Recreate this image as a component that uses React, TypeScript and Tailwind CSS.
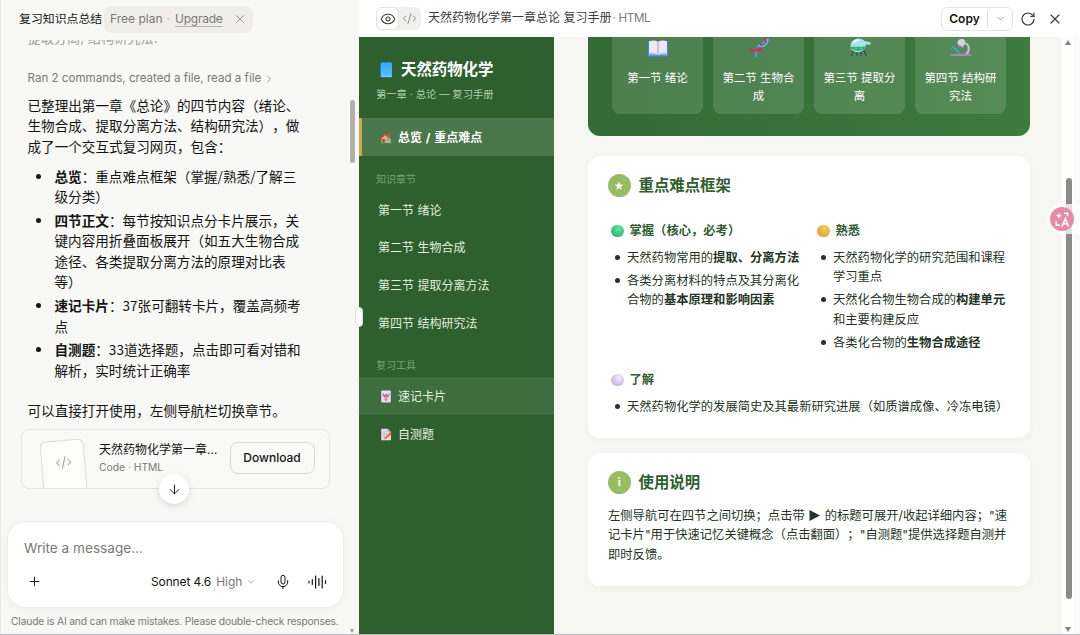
import type { ReactNode } from 'react'
import { ArrowDown, ChevronDown, ChevronRight, CodeXml, Eye, Mic, Plus, RotateCw, X } from 'lucide-react'

const BookIcon = () => (
  <svg width="14" height="16" viewBox="0 0 14 16">
    <defs>
      <linearGradient id="book" x1="0" y1="0" x2="0" y2="1">
        <stop offset="0" stopColor="#3ba5f2" />
        <stop offset="1" stopColor="#4fc3fb" />
      </linearGradient>
    </defs>
    <rect x="1" y=".5" width="12" height="15" rx="1" fill="#2377c8" />
    <rect x="2" y=".5" width="11" height="13.5" rx="1" fill="url(#book)" />
    <path d="M2 14.5h11" stroke="#b9dcf5" strokeWidth=".8" />
  </svg>
)

const HouseIcon = () => (
  <svg width="12" height="12" viewBox="0 0 12 12">
    <path d="M8.5 1h1.7v4H8.5z" fill="#b85a45" />
    <path d="M1.5 6 4.7 2l6 3.8V11h-9.2z" fill="#e7a586" />
    <path d="M.5 6.3 4.5 1.2l6.8 5.2-1 .8L5 3.2 1.3 7.2z" fill="#d4483a" />
    <path d="M2.5 7h2.2v4H2.5z" fill="#a34a32" />
    <path d="M6.5 6.6h2.8v2.6H6.5z" fill="#52b4e5" />
    <path d="M.8 10.5h3v1.2h-3zM9.5 10h2v1.7h-2z" fill="#54a851" />
  </svg>
)

const JokerIcon = () => (
  <svg width="12" height="13" viewBox="0 0 12 13">
    <rect x="1.2" y=".5" width="9.6" height="12" rx="1" fill="#e6deee" />
    <path d="M3 4.5 5 5l1-2 1 2 2.2-.7-.8 3H3.8z" fill="#c85a9c" />
    <circle cx="6" cy="8" r="1.8" fill="#e89a6b" />
    <path d="M4.2 9.5h3.6L6 11z" fill="#5a77d6" />
    <circle cx="3" cy="4.5" r=".8" fill="#d9495c" />
    <circle cx="9" cy="4.3" r=".8" fill="#4ba0dd" />
  </svg>
)

const MemoIcon = () => (
  <svg width="12" height="13" viewBox="0 0 12 13">
    <path d="M1.2.8h6.3L11 4v8.3H1.2z" fill="#e3dae9" />
    <path d="M7.5.8 11 4H7.5z" fill="#b9a8c4" />
    <path d="M3 4h3.5M3 6h4M3 8h2" stroke="#b4a4c0" strokeWidth=".7" />
    <path d="m4 11.2.8-2.3 5-4.3 1.7 1.9-5.2 4.2z" fill="#ef7a3c" />
    <path d="m9.4 5 .9-.8 1.6 1.8-.9.8z" fill="#e23f54" />
  </svg>
)

const OpenBookIcon = () => (
  <svg width="22" height="20" viewBox="0 0 22 20">
    <path d="M.8 4h20.4v15.5H.8z" fill="#3f86dd" />
    <path d="M1.5 17h19v1.3h-19z" fill="#77baf4" />
    <path d="M2 4.2q5-1.6 9 .5 4-2.1 9-.5v12.6q-5-1-9 .8-4-1.8-9-.8z" fill="#efe6f8" />
    <path d="M11 4.8v12.4" stroke="#aa98c4" strokeWidth="1" />
  </svg>
)

const DnaIcon = () => (
  <svg width="22" height="20" viewBox="0 0 22 20" fill="none" strokeLinecap="round">
    <path d="m4.5 12 3 4M7.500 11l2.500 3M12.500 6l3.500 3.500M15 4l3 3" stroke="#8b6ad0" strokeWidth="1" />
    <path d="M7.800 19c1.700-3-.8-5.500 1-8 2-3 4-1 6-5 1-2 3-3 5.500-3" stroke="#38a7ee" strokeWidth="1.900" />
    <path d="M1.500 13c3-1 6 1.500 9 .5 3.500-1.500 1-4.500 3-6.500M17 1c-.5 2 .5 4 3 5" stroke="#df2850" strokeWidth="1.900" />
    <path d="M11 8c1 2.500 4 2.500 7-.5s1-3 1.500-5" stroke="#54c1f7" strokeWidth="1.500" />
    <path d="M9 11c0 3 3 3.500 5 0" stroke="#df2850" strokeWidth="1.700" />
  </svg>
)

const AlembicIcon = () => (
  <svg width="22" height="20" viewBox="0 0 22 20">
    <path d="M5 13 2.500 19M14.500 13l3 6M8 14v5M12 14v5M3 14h13.500" stroke="#33495a" strokeWidth="1.200" fill="none" />
    <path d="M1.500 9c0-8 11-9.500 14-5l6 1.200v2.600l-4.800-.3c.5 10-15.200 10-15.200 1.500z" fill="#a7e2ef" />
    <path d="M1.700 9.800h15c-.6 5.500-14.400 5.500-15 0z" fill="#26b26d" />
    <path d="M4 6.500c1-2.500 4-3.500 6-3" stroke="#e2fbff" strokeWidth="1.700" fill="none" />
    <circle cx="7" cy="11.300" r=".8" fill="#8ff0b0" />
    <circle cx="12" cy="11.300" r=".8" fill="#8ff0b0" />
  </svg>
)

const MicroscopeIcon = () => (
  <svg width="22" height="20" viewBox="0 0 22 20">
    <path d="M14 6c6 1 6 8 2 11.500" stroke="#c9b9cf" strokeWidth="2.200" fill="none" />
    <path d="M7.500 6c-.5-3 3.500-5 6.500-3.500 1.800 1 1.500 3 .5 5L12.500 11 8.500 9z" fill="#dacde0" />
    <path d="m8.300 7.800 4.500 2-1 1.900-4-1.900z" fill="#8e7a9b" />
    <path d="m2.500 8.500 7.500 6.500-1 1.500L1.500 10z" fill="#39a2e6" />
    <path d="M.5 17.200q10.500-1.200 21 0V19H.5z" fill="#9f88b0" />
  </svg>
)

const Ball = ({ from, to }: { from: string; to: string }) => (
  <span
    className="ml-[3px] mr-[6px] size-[12.5px] shrink-0 rounded-full"
    style={{ background: `radial-gradient(circle at 60% 30%, ${from}, ${to})` }}
  />
)

const lines = (rows: ReactNode[]) =>
  rows.map((row, i) => (
    <span key={i} className="block whitespace-nowrap">
      {row}
    </span>
  ))

const summary: { title: string; rows: string[] }[] = [
  { title: '总览', rows: ['：重点难点框架（掌握/熟悉/了解三', '级分类）'] },
  {
    title: '四节正文',
    rows: ['：每节按知识点分卡片展示，关', '键内容用折叠面板展开（如五大生物合成', '途径、各类提取分离方法的原理对比表', '等）'],
  },
  { title: '速记卡片', rows: ['：37张可翻转卡片，覆盖高频考', '点'] },
  { title: '自测题', rows: ['：33道选择题，点击即可看对错和', '解析，实时统计正确率'] },
]

const ChatPanel = () => (
  <section className="relative flex w-[359px] shrink-0 flex-col border-l border-[#e9e9e7] bg-[#f8f8f6] text-[#141413]">
    <header className="flex h-[38px] shrink-0 items-center pl-[18px]">
      <h1 className="w-[85px] shrink-0 whitespace-nowrap text-[11.9px]">复习知识点总结</h1>
      <div className="flex h-[27px] w-[149px] items-center rounded-lg bg-[#efeeeb] pl-[6px] text-[12px] text-[#7b7974]">
        <span className="whitespace-nowrap">Free plan</span>
        <span className="ml-1 mr-[5px] text-[#aaa]">·</span>
        <span className="border-b border-[#b5b3ad] leading-[14px] tracking-[-0.02em]">Upgrade</span>
        <X size={14} strokeWidth={1.3} className="ml-2.5" />
      </div>
    </header>

    <div className="flex min-h-0 flex-1 flex-col pl-[26.5px]">
      <div className="mt-0.5 flex h-[5px] shrink-0 items-end overflow-hidden text-[13.2px] leading-[14px] text-[#a09f9b]">
        提取分离, 结构研究法.
      </div>
      <div className="mt-[24.5px] flex h-[18px] shrink-0 items-center text-[11.6px] text-[#7b7974]">
        <span className="whitespace-nowrap">Ran 2 commands, created a file, read a file</span>
        <ChevronRight size={12} strokeWidth={1.5} className="ml-0.5" />
      </div>
      <div className="mt-[7.5px] font-['Noto_Sans_CJK_SC',sans-serif] text-[13.6px] leading-[20.4px]">
        <p>{lines(['已整理出第一章《总论》的四节内容（绪论、', '生物合成、提取分离方法、结构研究法），做', '成了一个交互式复习网页，包含：'])}</p>
        <ul className="mt-[9.5px] flex flex-col gap-[3.5px]">
          {summary.map(({ title, rows }) => (
            <li key={title} className="flex">
              <span className="ml-2 mr-[14px] mt-2 size-[5px] shrink-0 rounded-full bg-[#141413]" />
              <div>
                {lines([
                  <>
                    <b>{title}</b>
                    {rows[0]}
                  </>,
                  ...rows.slice(1),
                ])}
              </div>
            </li>
          ))}
        </ul>
        <p className="mt-5 whitespace-nowrap">可以直接打开使用，左侧导航栏切换章节。</p>
      </div>
    </div>

    <div className="ml-[19.5px] flex h-[60px] w-[309px] shrink-0 overflow-hidden rounded-lg border border-[#e6e5e2] bg-[#f9f9f7]">
      <div className="ml-[20px] mt-[10px] flex h-[64px] w-[44px] shrink-0 -rotate-[5deg] justify-center rounded-md border border-[#dddcd9] bg-[#fcfcfb] pt-[13px] text-[#8c8a85]">
        <CodeXml size={17} strokeWidth={1.2} />
      </div>
      <div className="ml-[13.5px] mt-[11px] w-[121.5px] whitespace-nowrap">
        <div className="text-[12px] leading-[18px]">天然药物化学第一章…</div>
        <div className="text-[10.3px] leading-[16px] text-[#7b7974]">Code · HTML</div>
      </div>
      <button className="ml-[9px] mt-[12px] h-8 w-[85px] shrink-0 rounded-lg border border-[#d9d8d5] text-[12px] font-medium">Download</button>
    </div>

    <div className="ml-[6px] mt-[32px] flex h-[87px] w-[337px] shrink-0 flex-col rounded-[18px] border border-[#ececea] bg-white px-[16px] shadow-[0_3px_14px_rgba(0,0,0,0.04)]">
      <div className="mt-[16px] text-[13.6px] leading-5 text-[#7b7974]">Write a message…</div>
      <div className="mt-[12px] flex h-6 items-center text-[12px]">
        <Plus size={15} strokeWidth={1.5} className="ml-[3px] shrink-0" />
        <span className="ml-[109px] whitespace-nowrap tracking-[-0.01em]">Sonnet 4.6</span>
        <span className="ml-[5px] text-[#7b7974]">High</span>
        <ChevronDown size={10} strokeWidth={1.5} className="ml-1 shrink-0 text-[#7b7974]" />
        <Mic size={16} strokeWidth={1.5} className="ml-[19px] shrink-0" />
        <svg width="19" height="14" viewBox="0 0 19 14" className="ml-[17px] shrink-0" stroke="currentColor" strokeWidth="1.2" strokeLinecap="round">
          <path d="M1 6v2M4.3 4.5v5M7.6 1v12M10.9 3.5v7M14.2 1v12M17.5 5.5v3" />
        </svg>
      </div>
    </div>
    <p className="mt-[5px] h-[21.5px] shrink-0 whitespace-nowrap pl-[10px] text-[10.3px] leading-[16px] tracking-[-0.018em] text-[#7b7974]">
      Claude is AI and can make mistakes. Please double-check responses.
    </p>

    <button className="absolute left-[158px] top-[474px] flex size-[30px] items-center justify-center rounded-full bg-white shadow-[0_2px_7px_rgba(0,0,0,0.13)]">
      <ArrowDown size={15} strokeWidth={1.5} />
    </button>
    <div className="absolute left-[349px] top-[100px] h-[63px] w-[5px] rounded-full bg-[#b0b0ae]" />
    <span className="absolute bottom-[1px] left-[349px] border-x-[2.5px] border-t-4 border-x-transparent border-t-[#999]" />
  </section>
)

const NavItem = ({ icon, children, className = '' }: { icon?: ReactNode; children: ReactNode; className?: string }) => (
  <a className={`flex h-[37.7px] items-center whitespace-nowrap border-l-[3px] border-transparent pl-4 text-[12px] text-[#e0efdf] ${className}`}>
    {icon && <span className="ml-[2px] mr-[6px]">{icon}</span>}
    {children}
  </a>
)

const Sidebar = () => (
  <nav className="w-[195px] shrink-0 bg-[#2d602e]">
    <div className="flex h-[81px] flex-col pl-[17px] pt-[22px]">
      <div className="flex h-[22px] items-center whitespace-nowrap text-[15.4px] font-bold text-white">
        <span className="ml-[3px] mr-2">
          <BookIcon />
        </span>
        天然药物化学
      </div>
      <div className="mt-[5px] whitespace-nowrap text-[10.3px] leading-4 text-[#b0d0ae]">第一章 · 总论 — 复习手册</div>
    </div>
    <NavItem icon={<HouseIcon />} className="border-l-[#d6a64c]! bg-[#4b774c] pt-[2px] font-bold text-white!">
      <span className="[word-spacing:1px]">总览 / 重点难点</span>
    </NavItem>
    <div className="mt-[15px] pl-[17px] text-[10px] leading-4 text-[#78a276]">知识章节</div>
    <div className="mt-[5px]">
      <NavItem>第一节 绪论</NavItem>
      <NavItem>第二节 生物合成</NavItem>
      <NavItem>第三节 提取分离方法</NavItem>
      <NavItem>第四节 结构研究法</NavItem>
    </div>
    <div className="mt-[15px] pl-[17px] text-[10px] leading-4 text-[#78a276]">复习工具</div>
    <div className="mt-[4px]">
      <NavItem icon={<JokerIcon />} className="bg-[#3e6e3e] pt-px">
        速记卡片
      </NavItem>
      <NavItem icon={<MemoIcon />} className="pt-[2px]">
        自测题
      </NavItem>
    </div>
  </nav>
)

const chapters = [
  { icon: <OpenBookIcon />, rows: ['第一节 绪论'] },
  { icon: <DnaIcon />, rows: ['第二节 生物合', '成'] },
  { icon: <AlembicIcon />, rows: ['第三节 提取分', '离'] },
  { icon: <MicroscopeIcon />, rows: ['第四节 结构研', '究法'] },
]

const CardTitle = ({ badge, children }: { badge: ReactNode; children: ReactNode }) => (
  <h2 className="flex h-[22px] items-center gap-2 text-[15.4px] font-bold text-[#2d602e]">
    <span className="flex size-[22.5px] items-center justify-center rounded-full bg-[#97bd63] text-[11px] text-white">{badge}</span>
    {children}
  </h2>
)

const Topic = ({ ball, title, items, className = '' }: { ball: ReactNode; title: string; items: ReactNode[][]; className?: string }) => (
  <div className={className}>
    <h3 className="flex h-5 items-center whitespace-nowrap text-[12.3px] font-bold text-[#315c32]">
      {ball}
      {title}
    </h3>
    <ul className="mt-[6.5px] flex flex-col gap-[3.3px]">
      {items.map((rows, i) => (
        <li key={i} className="flex leading-[19.8px]">
          <span className="ml-[7px] mr-[7px] mt-[7px] size-[5px] shrink-0 rounded-full bg-[#263326]" />
          <div>{lines(rows)}</div>
        </li>
      ))}
    </ul>
  </div>
)

const Content = () => (
  <main className="flex min-w-0 flex-1 justify-between bg-[#f6f7f2] pl-[34px] text-[12.3px] text-[#263326]">
    <div className="w-[442px] shrink-0">
      <div className="flex h-[98.5px] gap-[10px] rounded-b-xl bg-linear-to-r from-[#326b34] to-[#3d7b3e] px-6">
        {chapters.map(({ icon, rows }) => (
          <div key={rows[0]} className="flex h-[76.5px] w-[91px] flex-col items-center rounded-b-lg bg-white/13 text-[11.5px] text-white">
            {icon}
            <div className="mt-[12px] text-center leading-[18px]">{lines(rows)}</div>
          </div>
        ))}
      </div>

      <section className="mt-5 h-[282px] rounded-xl bg-white px-5 pt-[19px] shadow-[0_2px_6px_rgba(45,96,46,0.05)]">
        <CardTitle
          badge={
            <svg width="10" height="10" viewBox="0 0 10 10" fill="currentColor">
              <path d="m5 .5 1.1 3.1 3.3.1-2.6 2 .9 3.3L5 7.1 2.3 9l.9-3.3-2.6-2 3.3-.1z" />
            </svg>
          }
        >
          重点难点框架
        </CardTitle>
        <div className="mt-[24.5px] grid grid-cols-[206px_1fr]">
          <Topic
            ball={<Ball from="#62e8a2" to="#1fa06a" />}
            title="掌握（核心，必考）"
            items={[
              [<>天然药物常用的<b>提取、分离方法</b></>],
              ['各类分离材料的特点及其分离化', <>合物的<b>基本原理和影响因素</b></>],
            ]}
          />
          <Topic
            ball={<Ball from="#f8cf57" to="#dd8f2e" />}
            title="熟悉"
            items={[
              ['天然药物化学的研究范围和课程', '学习重点'],
              [<>天然化合物生物合成的<b>构建单元</b></>, '和主要构建反应'],
              [<>各类化合物的<b>生物合成途径</b></>],
            ]}
          />
        </div>
        <Topic
          className="mt-[17px]"
          ball={<Ball from="#f3edfb" to="#b3a0d2" />}
          title="了解"
          items={[['天然药物化学的发展简史及其最新研究进展（如质谱成像、冷冻电镜）']]}
        />
      </section>

      <section className="mt-[15px] h-[133px] rounded-xl bg-white px-5 pt-[19px] shadow-[0_2px_6px_rgba(45,96,46,0.05)]">
        <CardTitle badge="i">使用说明</CardTitle>
        <p className="mt-3 leading-[19.7px]">
          {lines([
            <>
              左侧导航可在四节之间切换；点击带{' '}
              <svg width="11" height="11" viewBox="0 0 11 11" className="mx-px inline align-[-1px]" fill="currentColor">
                <path d="M.5 0 11 5.5.5 11z" />
              </svg>{' '}
              的标题可展开/收起详细内容；"速
            </>,
            '记卡片"用于快速记忆关键概念（点击翻面）；"自测题"提供选择题自测并',
            '即时反馈。',
          ])}
        </p>
      </section>
    </div>

    <div className="flex w-[18px] shrink-0 border-r-[6px] border-[#f9f9f9] bg-[#fdfdfd]">
      <div className="flex w-3 flex-col items-center">
        <span className="mt-[3px] border-x-[3.5px] border-b-[5px] border-x-transparent border-b-[#858585]" />
        <div className="ml-[1px] mt-[133px] h-[421px] w-[6px] rounded-full bg-[#8a8a8a]" />
        <span className="mt-[28px] border-x-[3.5px] border-t-[5px] border-x-transparent border-t-[#858585]" />
      </div>
    </div>
  </main>
)

const PreviewHeader = () => (
  <header className="flex h-[37px] shrink-0 items-center bg-white pl-[17px] pr-[17px] text-[12px] text-[#3d3d3a]">
    <div className="flex h-[23px] w-[45px] items-center rounded-md bg-[#f0f0ee]">
      <span className="flex h-[23px] w-[23px] items-center justify-center rounded-md border border-[#e3e2df] bg-white">
        <Eye size={16} strokeWidth={1.6} />
      </span>
      <CodeXml size={15} strokeWidth={1.3} className="ml-[3px] text-[#7b7974]" />
    </div>
    <div className="ml-[7px] whitespace-nowrap">
      天然药物化学第一章总论 复习手册<span className="ml-px text-[11.6px] tracking-[-0.025em] text-[#7b7974]">· HTML</span>
    </div>
    <div className="ml-auto flex h-6 w-[72px] shrink-0 items-center rounded-md border border-[#e5e4e1] text-[#141413]">
      <span className="w-[45px] text-center text-[12px] font-semibold">Copy</span>
      <span className="flex h-4 flex-1 items-center justify-center border-l border-[#dedddb] text-[#7b7974]">
        <ChevronDown size={11} strokeWidth={1.5} />
      </span>
    </div>
    <RotateCw size={16} strokeWidth={1.8} className="ml-[7px]" />
    <X size={16} strokeWidth={1.8} className="ml-[11px]" />
  </header>
)

export default function App() {
  return (
    <div className="relative flex h-[635px] w-[1080px] overflow-hidden border-b border-[#b9bcbf] font-[Inter,'Noto_Sans_CJK_SC',sans-serif] [text-spacing-trim:space-all]">
      <ChatPanel />
      <section className="flex min-w-0 flex-1 flex-col">
        <PreviewHeader />
        <div className="flex min-h-0 flex-1">
          <Sidebar />
          <Content />
        </div>
      </section>

      {/* panel resize grip */}
      <div className="absolute left-[355px] top-[307px] h-5 w-[8px] rounded-full border border-[#e0e0dd] bg-white" />

      {/* floating translate shortcut */}
      <div className="absolute right-0 top-[204px] flex h-[30px] w-[33px] items-center rounded-l-full bg-white/75 pl-[3px]">
        <div className="flex size-6 items-center justify-center rounded-full bg-[#e889a5]">
          <svg width="17" height="17" viewBox="0 0 17 17" fill="none" stroke="white" strokeWidth="1.6">
            <path d="M5 1c.4 2.7 1 3.3 3.7 3.7C6 5.1 5.4 5.7 5 8.4 4.6 5.7 4 5.1 1.3 4.7 4 4.3 4.6 3.7 5 1z" fill="white" stroke="none" />
            <path d="M10 2.3h3.5v3M2.3 10v4.3h3.5M8 15.5l3.3-8 3.3 8M9.3 12.8h4" />
          </svg>
        </div>
      </div>
    </div>
  )
}
